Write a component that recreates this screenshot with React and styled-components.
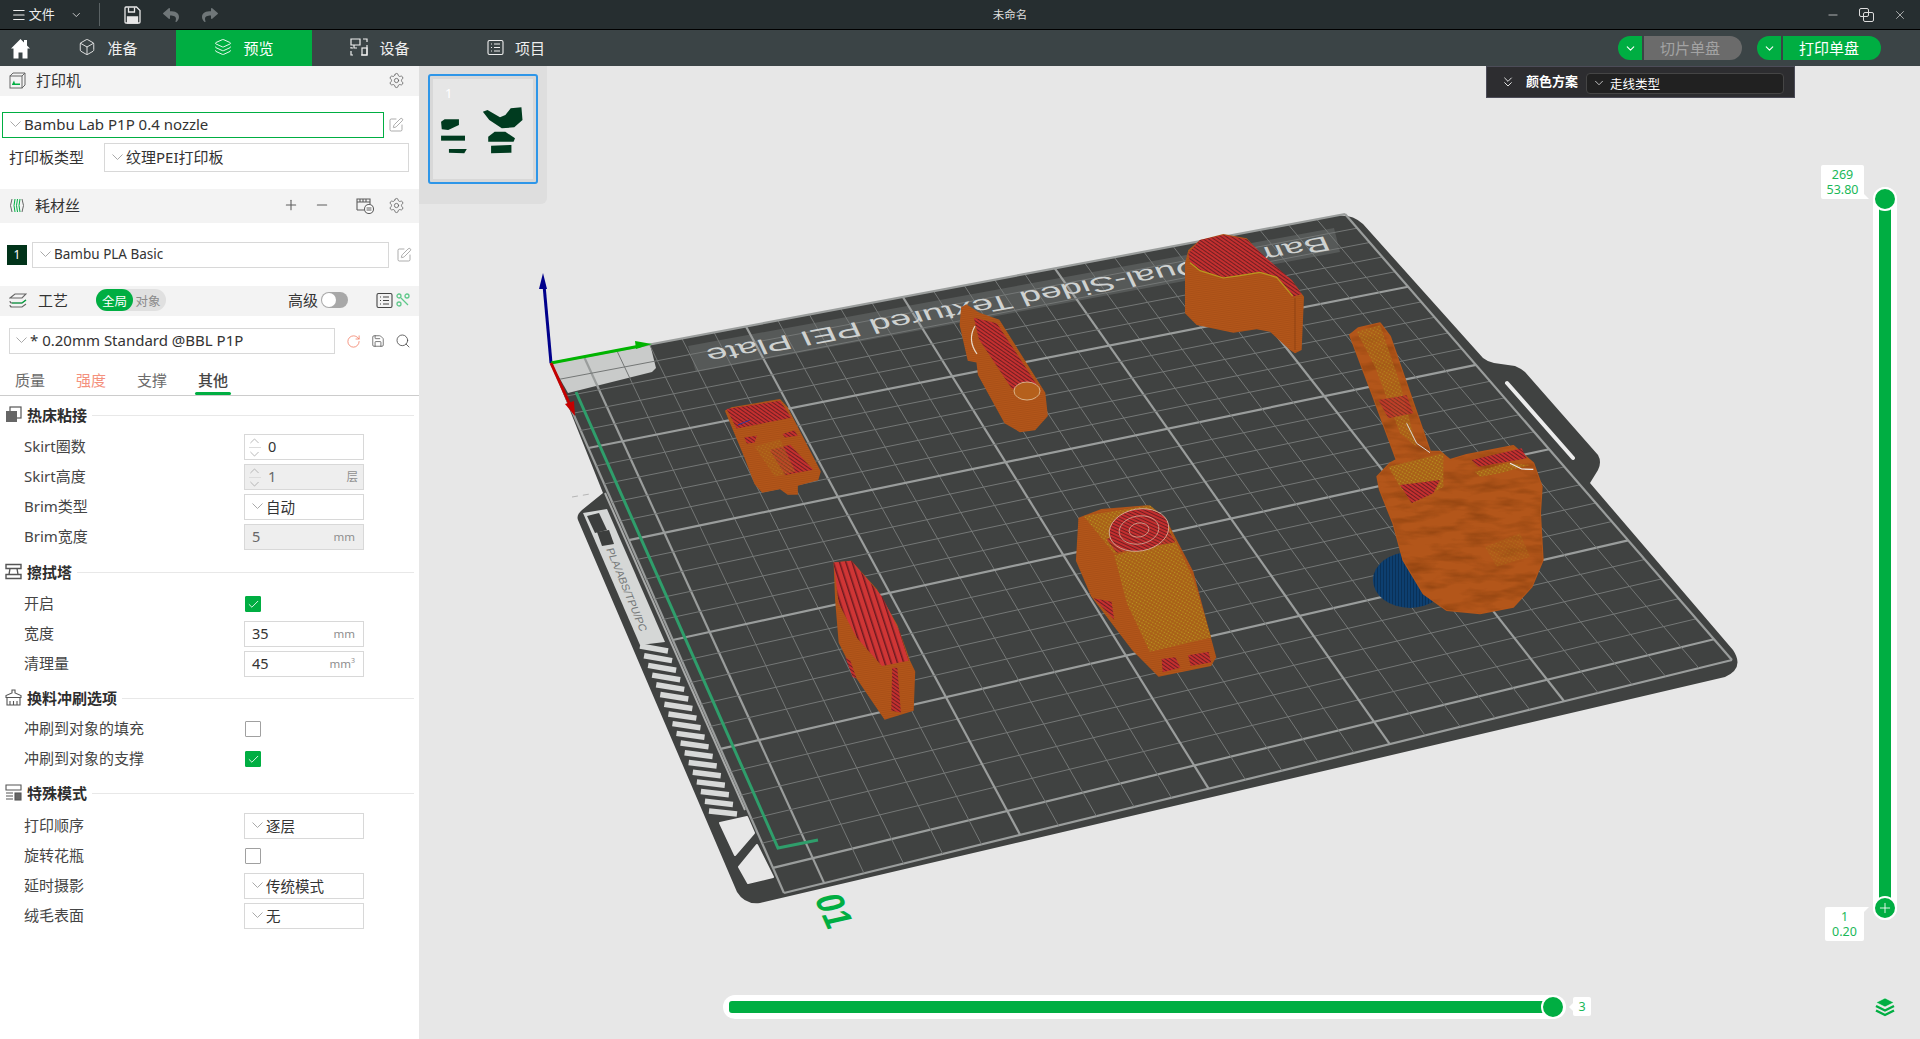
import React from 'react';
import styled, { createGlobalStyle } from 'styled-components';
import { Menu, ChevronDown, Save, Box, Layers, SquarePen, Plus, Minus, Settings, Search, RotateCw, Check, X, ChevronsDown } from 'lucide-react';
import { FaReply, FaShare } from 'react-icons/fa';

const GREEN = '#00ae42';
const FONT = '"Noto Sans", "Noto Sans CJK SC", sans-serif';

const Global = createGlobalStyle`
  html, body { margin: 0; padding: 0; height: 100%; overflow: hidden; }
  body { font-family: ${FONT}; color: #333; background: #e7e7e7; }
  * { box-sizing: border-box; }
`;

const Page = styled.div`
  display: flex;
  flex-direction: column;
  width: 1920px;
  height: 1039px;
  overflow: hidden;
`;

/* top bars */
const TitleBar = styled.div`
  display: flex;
  align-items: center;
  height: 30px;
  background: #262e30;
  border-bottom: 1px solid #000;
  color: #eee;
  flex: none;
`;
const TitleLeft = styled.div`
  display: flex;
  align-items: center;
  width: 240px;
  padding-left: 11px;
  font-size: 13px;
`;
const MenuText = styled.span`
  margin-left: 2px;
  width: 52px;
  padding-bottom: 2px;
`;
const TitleDivider = styled.div`
  width: 1px;
  height: 23px;
  background: #5a6264;
  margin: 0 24px 0 17px;
`;
const TitleAction = styled.span`
  display: flex;
  margin-right: ${p => p.$gap || 22}px;
  color: ${p => (p.$dim ? '#6f7678' : '#e8e8e8')};
`;
const TitleText = styled.div`
  flex: 1;
  text-align: center;
  font-size: 11.5px;
  padding-bottom: 2px;
  color: #ddd;
`;
const WindowButtons = styled.div`
  display: flex;
  align-items: center;
  gap: 19px;
  width: 140px;
  padding-left: 46px;
  color: #ddd;
`;
const TabBar = styled.div`
  display: flex;
  align-items: stretch;
  height: 36px;
  background: #3b4446;
  color: #eee;
  flex: none;
`;
const HomeButton = styled.div`
  display: flex;
  align-items: center;
  justify-content: center;
  width: 40px;
  color: #fff;
`;
const Tab = styled.div`
  display: flex;
  align-items: center;
  justify-content: center;
  gap: 11px;
  width: 136px;
  padding-bottom: 2px;
  font-size: 15px;
  background: ${p => (p.$active ? GREEN : 'transparent')};
  color: ${p => (p.$active ? '#fff' : '#eee')};
`;
const TabActions = styled.div`
  display: flex;
  align-items: center;
  gap: 15px;
  margin-left: auto;
  padding-right: 39px;
`;
const SplitButton = styled.div`
  display: flex;
  gap: 2px;
  height: 24px;
`;
const SplitArrow = styled.div`
  display: flex;
  align-items: center;
  justify-content: center;
  width: 24px;
  background: ${GREEN};
  border-radius: 12px 0 0 12px;
  color: #fff;
`;
const SplitLabel = styled.div`
  width: 98px;
  display: flex;
  align-items: center;
  justify-content: center;
  padding: 0 6px 2px 0;
  font-size: 15px;
  border-radius: 0 12px 12px 0;
  background: ${p => (p.$disabled ? '#6b6b6b' : GREEN)};
  color: ${p => (p.$disabled ? '#a3a3a3' : '#fff')};
`;

/* sidebar */
const Body = styled.div`
  display: flex;
  flex: 1;
  min-height: 0;
`;
const Sidebar = styled.aside`
  width: 419px;
  flex: none;
  background: #fff;
`;
const PanelHeader = styled.div`
  display: flex;
  align-items: center;
  height: ${p => p.$h || 30}px;
  padding: 0 0 2px 9px;
  background: #f3f3f3;
`;
const PanelTitle = styled.span`
  font-size: 15px;
  color: #333;
  margin-left: ${p => p.$left || 10}px;
  margin-bottom: 1px;
`;
const HeaderIcons = styled.div`
  display: flex;
  align-items: center;
  margin-left: auto;
  color: #5c5c5c;
`;
const HeaderIcon = styled.span`
  display: flex;
  margin-right: ${p => p.$gap || 0}px;
`;
const PrinterBlock = styled.div`
  padding: 16px 0 17px 2px;
`;
const SelectRow = styled.div`
  display: flex;
  align-items: center;
  margin-top: ${p => p.$top || 0}px;
  padding-left: ${p => p.$left || 0}px;
`;
const SelectBox = styled.div`
  display: flex;
  align-items: center;
  width: ${p => p.$w}px;
  height: ${p => p.$h || 26}px;
  margin-left: ${p => p.$ml || 0}px;
  padding: 0 0 2px ${p => p.$pad || 7}px;
  border: 1px solid ${p => (p.$focus ? GREEN : '#d8d8d8')};
  background: #fff;
  font-size: ${p => p.$size || 15}px;
  color: #333;
  white-space: nowrap;
`;
const ChevronSvg = styled.svg`
  width: ${p => p.$w || 11}px;
  height: 6px;
  margin-right: ${p => p.$gap || 0}px;
  flex: none;
`;
const Chevron = ({ gap, up, w }) => (
  <ChevronSvg $gap={gap} $w={w} viewBox="0 0 11 6">
    <polyline points={up ? '0.5,5.5 5.5,0.5 10.5,5.5' : '0.5,0.5 5.5,5.5 10.5,0.5'} fill="none" stroke="#a9a9a9" strokeWidth="1" />
  </ChevronSvg>
);
const EditIcon = styled.span`
  display: flex;
  margin-left: ${p => p.$ml || 4}px;
  color: #8f8f8f;
`;
const PlateLabel = styled.span`
  width: 95px;
  padding: 0 0 3px 7px;
  font-size: 15px;
  color: #333;
`;
const FilamentBlock = styled.div`
  display: flex;
  align-items: center;
  height: 63px;
  padding: 0 0 0 7px;
`;
const FilamentBadge = styled.div`
  width: 20px;
  height: 20px;
  background: #01331a;
  color: #fff;
  display: flex;
  align-items: center;
  justify-content: center;
  font-size: 12px;
`;
const ModeSwitch = styled.div`
  display: flex;
  align-items: center;
  width: 70px;
  height: 22px;
  margin-left: 28px;
  border-radius: 11px;
  background: #e0e0e0;
  font-size: 12.5px;
  color: #8a8a8a;
`;
const ModeOn = styled.div`
  width: 37px;
  height: 22px;
  border-radius: 11px;
  background: ${GREEN};
  color: #fff;
  display: flex;
  align-items: center;
  justify-content: center;
`;
const ModeOff = styled.div`
  flex: 1;
  text-align: center;
  padding-right: 3px;
`;
const AdvancedLabel = styled.span`
  font-size: 15px;
  color: #333;
  margin: 0 0 2px auto;
`;
const Toggle = styled.div`
  width: 27px;
  height: 16px;
  margin: 0 28px 0 3px;
  border-radius: 8px;
  background: #a8a8a8;
  padding: 1px;
`;
const ToggleKnob = styled.div`
  width: 14px;
  height: 14px;
  border-radius: 50%;
  background: #fff;
`;
const Tabs = styled.div`
  display: flex;
  height: 42px;
  padding: 14px 0 0 15px;
  border-bottom: 1px solid #ccc;
`;
const SubTab = styled.div`
  position: relative;
  width: 61px;
  font-size: 15px;
  line-height: 24px;
  color: ${p => (p.$warn ? '#f4917d' : p.$active ? '#444' : '#6b6b6b')};
  font-weight: ${p => (p.$active ? 500 : 400)};
  &::after {
    content: '';
    display: ${p => (p.$active ? 'block' : 'none')};
    position: absolute;
    left: -3px;
    top: 24px;
    width: 36px;
    height: 3px;
    border-radius: 2px;
    background: ${GREEN};
  }
`;
const SectionTitle = styled.div`
  display: flex;
  align-items: center;
  height: 22px;
  margin-top: ${p => p.$top}px;
  margin-bottom: ${p => p.$bottom}px;
  padding: 0 5px 2px;
  font-size: 15px;
  font-weight: 700;
  color: #2e2e2e;
  &::after {
    content: '';
    flex: 1;
    height: 1px;
    margin: 2px 0 0 5px;
    background: #e8e8e8;
  }
`;
const SectionIcon = styled.svg`
  width: 17px;
  height: 17px;
  margin-right: 5px;
  flex: none;
`;
const Row = styled.div`
  display: flex;
  align-items: center;
  height: 30px;
  padding-left: 24px;
`;
const RowLabel = styled.div`
  width: 220px;
  padding-bottom: 3px;
  font-size: 15px;
  color: #454545;
`;
const Field = styled.div`
  display: flex;
  align-items: center;
  width: 120px;
  height: 26px;
  padding: 0 ${p => (p.$spin ? 5 : 8)}px 2px ${p => (p.$spin ? 3 : 7)}px;
  border: 1px solid #d8d8d8;
  background: ${p => (p.$disabled ? '#eeeeee' : '#fff')};
  font-size: 14.5px;
  color: ${p => (p.$disabled ? '#666' : '#333')};
`;
const Spinner = styled.div`
  display: flex;
  flex-direction: column;
  align-items: center;
  gap: 3px;
  width: 13px;
  margin: 2px 7px 0 0;
`;
const SpinDivider = styled.div`
  width: 12px;
  height: 1px;
  background: #dcdcdc;
`;
const Unit = styled.span`
  margin-left: auto;
  font-size: 11.5px;
  color: #8e8e8e;
`;
const Sup = styled.sup`
  font-size: 7px;
`;
const CheckBox = styled.div`
  display: flex;
  align-items: center;
  justify-content: center;
  width: 16px;
  height: 16px;
  margin-left: 1px;
  border-radius: 1px;
  background: ${p => (p.$on ? GREEN : '#fff')};
  border: 1px solid ${p => (p.$on ? GREEN : '#a0a0a0')};
  color: #fff;
`;

/* viewport overlays */
const Viewport = styled.main`
  position: relative;
  flex: 1;
  background: #e7e7e7;
  overflow: hidden;
`;
const Scene = styled.svg`
  position: absolute;
  inset: 0;
  width: 1501px;
  height: 973px;
`;
const PlateList = styled.div`
  position: absolute;
  left: 0;
  top: 0;
  width: 128px;
  height: 138px;
  padding: 8px 9px;
  background: #dedede;
  border-radius: 0 0 6px 0;
`;
const PlateThumb = styled.div`
  position: relative;
  width: 110px;
  height: 110px;
  border: 2px solid #2e96e8;
  border-radius: 3px;
  background: #e6e6e6;
  box-shadow: inset 0 0 0 3px #d8d8d8;
`;
const ThumbNumber = styled.span`
  position: absolute;
  left: 15px;
  top: 8px;
  font-size: 13px;
  color: #fff;
`;
const ThumbSvg = styled.svg`
  position: absolute;
  left: -2px;
  top: -2px;
  width: 110px;
  height: 110px;
`;
const ColorPanel = styled.div`
  position: absolute;
  top: 0;
  left: 1067px;
  display: flex;
  align-items: center;
  width: 309px;
  height: 32px;
  padding-left: 13px;
  background: #2d2d30;
  border: 1px solid #4c4c58;
  color: #fff;
`;
const ColorTitle = styled.span`
  font-size: 13px;
  font-weight: 700;
  margin: 0 0 3px 10px;
  width: 60px;
`;
const ColorSelect = styled.div`
  display: flex;
  align-items: center;
  width: 198px;
  height: 21px;
  margin-top: 3px;
  padding: 0 0 1px 5px;
  border: 1px solid #454545;
  border-radius: 4px;
  background: #212121;
  font-size: 12.5px;
`;
const ColorChevron = styled.span`
  display: flex;
  width: 18px;
`;
const VSliderTrack = styled.div`
  position: absolute;
  left: 1454px;
  top: 121px;
  width: 24px;
  height: 733px;
  border-radius: 12px;
  background: #fff;
  padding: 10px 6px;
`;
const VSliderFill = styled.div`
  width: 12px;
  height: 100%;
  background: ${GREEN};
`;
const Knob = styled.div`
  position: absolute;
  display: flex;
  align-items: center;
  justify-content: center;
  width: 24px;
  height: 24px;
  border-radius: 50%;
  background: ${GREEN};
  border: 2px solid #fff;
  color: #fff;
  left: ${p => p.$x}px;
  top: ${p => p.$y}px;
`;
const LayerTip = styled.div`
  position: absolute;
  left: ${p => p.$x}px;
  top: ${p => p.$y}px;
  width: ${p => p.$w || 43}px;
  height: ${p => p.$h || 34}px;
  display: flex;
  flex-direction: column;
  align-items: center;
  justify-content: center;
  background: #fff;
  border-radius: 2px;
  font-size: 12.5px;
  line-height: 15px;
  color: #1ab858;
  &::after {
    content: '';
    position: absolute;
    ${p => p.$tail};
    width: 0;
    height: 0;
    border: 5px solid transparent;
    ${p => p.$tailColor};
  }
`;
const HSliderTrack = styled.div`
  position: absolute;
  left: 304px;
  top: 929px;
  width: 843px;
  height: 24px;
  border-radius: 12px;
  background: #fff;
  padding: 6px;
`;
const HSliderFill = styled.div`
  width: 100%;
  height: 12px;
  border-radius: 3px;
  background: ${GREEN};
`;
const LayersButton = styled.svg`
  position: absolute;
  left: 1455px;
  top: 931px;
  width: 22px;
  height: 20px;
`;

/* small drawn icons */
const HomeIcon = () => (
  <svg width="19" height="21" viewBox="0 0 19 21" fill="#fff">
    <path d="M9.500 1L0 10.500h2.500V20.500h5v-6h4v6h5V10.500H19L16 7.500V2h-3v2.500z" />
  </svg>
);
const FloppyIcon = () => (
  <svg width="17" height="18" viewBox="0 0 17 18" fill="none" stroke="#e8e8e8" strokeWidth="1.300">
    <path d="M1 2q0-1 1-1h10.500L16 4.500V16q0 1-1 1H2q-1 0-1-1z" />
    <path d="M4.500 1.500V6h6V1.500" />
    <path d="M3.500 11h10v6h-10z" fill="#e8e8e8" />
  </svg>
);
const PrinterIcon = () => (
  <svg width="17" height="17" viewBox="0 0 17 17" fill="none" stroke="#666" strokeWidth="1">
    <rect x="1" y="4" width="12" height="12" />
    <path d="M1 4l3-3h12v12l-3 3M13 4l3-3" />
    <path d="M3 13h8v-1.500H6l-1-3-2 4z" fill={GREEN} stroke="none" />
  </svg>
);
const SpoolIcon = () => (
  <svg width="16" height="17" viewBox="0 0 16 17" fill="none" strokeWidth="1">
    <path d="M3 2Q0 8.500 3 15M13 2q3 6.500 0 13" stroke="#666" />
    <path d="M6 2q-2 6.500 0 13M8.500 2q-2 6.500 0 13M11 2q-2 6.500 0 13" stroke={GREEN} />
  </svg>
);
const ProcessIcon = () => (
  <svg width="18" height="16" viewBox="0 0 18 16" fill="none" stroke="#666" strokeWidth="1.100">
    <path d="M1 6l5-4h11l-4 4H1zM1 9c0 1.500 1 2 2 2h10l4-3M1 13c0 1.500 1 2 2 2h10l4-3" />
    <path d="M3 11h10l4-3" stroke={GREEN} />
  </svg>
);
const SwapIcon = () => (
  <svg width="18" height="18" viewBox="0 0 18 18" fill="none" stroke="#5c5c5c" strokeWidth="1.100">
    <path d="M1 14V3h13v5M1 6h13M4 3v3M7 3v3M10 3v3M1 14h7" />
    <circle cx="13" cy="13" r="4.500" fill="#fff" />
    <path d="M10.500 12h5M10.500 14h5" />
  </svg>
);
const WipeIcon = () => (
  <SectionIcon viewBox="0 0 17 17" fill="none" stroke="#555" strokeWidth="1.400">
    <path d="M1 1.500h15v4H1zM1 11.500h15v4H1zM5 5.500l-1 6M12 5.500l1 6" />
  </SectionIcon>
);
const BedIcon = () => (
  <SectionIcon viewBox="0 0 17 17">
    <rect x="5" y="1" width="11" height="11" fill="none" stroke="#555" strokeWidth="1.200" />
    <rect x="1" y="5" width="11" height="11" fill="#666" />
  </SectionIcon>
);
const BrushIcon = () => (
  <SectionIcon viewBox="0 0 17 17" fill="none" stroke="#555" strokeWidth="1.100">
    <path d="M7 1h3v3l6 2.500v2H1v-2L7 4zM2 8.500V16h13V8.500M5 12v4M8.500 12v4M12 12v4" />
  </SectionIcon>
);
const ModeIcon = () => (
  <SectionIcon viewBox="0 0 17 17" fill="none" stroke="#555" strokeWidth="1.100">
    <path d="M1 1h15v5H1zM1 9h7M1 12h7M1 15h7" />
    <rect x="10" y="9" width="6" height="7" fill="#666" />
  </SectionIcon>
);
const DeviceIcon = () => (
  <svg width="18" height="18" viewBox="0 0 18 18" fill="none" stroke="#eee" strokeWidth="1.200">
    <path d="M1 1h9v6H1zM3 10H1v-1M3 17H1v-4M13 1h4v3M17 7v10h-6M6 17" />
    <rect x="12" y="10" width="5" height="7" />
    <path d="M4 7v3h3" />
  </svg>
);
const ListBoxIcon = ({ color = '#eee' }) => (
  <svg width="17" height="17" viewBox="0 0 17 17" fill="none" stroke={color} strokeWidth="1.100">
    <rect x="1" y="1.500" width="15" height="14" rx="1.500" />
    <path d="M4 5h1M4 8.500h1M4 12h1M7 5h6M7 8.500h6M7 12h6" />
  </svg>
);
const TuneIcon = () => (
  <svg width="14" height="14" viewBox="0 0 14 14" fill="none" stroke="#5fc88a" strokeWidth="1.300">
    <circle cx="3" cy="3" r="2" />
    <circle cx="11" cy="3" r="2" />
    <circle cx="3" cy="11" r="2" />
    <path d="M5 5l7 7" />
  </svg>
);

/* plate scene data, points read off the reference */
const pts = (ox, oy, sx, sy, list) => list.map(([x, y]) => `${ox + x / sx},${oy + y / sy}`).join(' ');
const z5 = list => pts(530, 200, 1.96, 2.8, list);
const z6 = list => pts(1300, 300, 3, 3, list);
const z9 = list => pts(1100, 190, 3, 3, list);

const plateOutline =
  'M551 363L1330 217Q1350 212 1363 224L1483 358Q1488 362 1494 363L1515 366Q1520 368 1525 372L1598 455Q1602 462 1598 470L1590 483L1733 650Q1745 668 1725 677L760 903Q745 905 737 892L578 520Q576 515 582 510L603 493Z';

const projector = (p0, p1, p2, p3) => {
  const dx1 = p1[0] - p2[0], dx2 = p3[0] - p2[0], sx = p0[0] - p1[0] + p2[0] - p3[0];
  const dy1 = p1[1] - p2[1], dy2 = p3[1] - p2[1], sy = p0[1] - p1[1] + p2[1] - p3[1];
  const den = dx1 * dy2 - dx2 * dy1;
  const g = (sx * dy2 - dx2 * sy) / den;
  const h = (dx1 * sy - sx * dy1) / den;
  const a = p1[0] - p0[0] + g * p1[0], b = p3[0] - p0[0] + h * p3[0];
  const d = p1[1] - p0[1] + g * p1[1], e = p3[1] - p0[1] + h * p3[1];
  return (u, v) => {
    const w = g * u + h * v + 1;
    return [(a * u + b * v + p0[0]) / w, (d * u + e * v + p0[1]) / w];
  };
};
const project = projector([551, 363], [1345, 214], [1732, 660], [784, 893]);
const CELLS = 26;

const gridLines = [];
for (let i = 0; i <= CELLS; i++) {
  const t = i / CELLS;
  const thick = i % 5 === 1 || i === 0 || i === CELLS;
  const a = project(t, 0), b = project(t, 1), c = project(0, 1 - t), d = project(1, 1 - t);
  gridLines.push({ k: `v${i}`, a, b, thick });
  gridLines.push({ k: `h${i}`, a: c, b: d, thick });
}

const lerp = (a, b, t) => a + (b - a) * t;
const hatch = Array.from({ length: 18 }, (_, i) => {
  const t = i / 17;
  return {
    x1: lerp(640, 709, t), y1: lerp(646, 811, t),
    x2: lerp(668, 737, t), y2: lerp(651, 814, t),
  };
});

const ThumbShapes = [
  [[1235, 365], [1245, 358], [1285, 358], [1285, 375], [1255, 390], [1237, 388]],
  [[1235, 407], [1302, 407], [1302, 422], [1235, 422]],
  [[1257, 447], [1307, 447], [1300, 460], [1257, 458]],
  [[1352, 335], [1365, 330], [1400, 352], [1415, 345], [1430, 325], [1460, 322], [1463, 360], [1440, 382], [1405, 385], [1370, 360]],
  [[1367, 410], [1385, 395], [1415, 395], [1442, 415], [1438, 425], [1367, 425]],
  [[1375, 437], [1432, 435], [1432, 458], [1375, 460]],
];

const pipeOutline = [[150, 105], [175, 85], [240, 70], [270, 110], [390, 455], [420, 455], [450, 480], [500, 465], [640, 438], [700, 490], [725, 560], [720, 640], [728, 780], [695, 860], [640, 920], [540, 940], [440, 930], [370, 880], [310, 780], [280, 670], [240, 570], [232, 530], [270, 490], [290, 480], [220, 290]];

const PlateScene = () => (
  <Scene viewBox="419 66 1501 973">
    <defs>
      <pattern id="redFine" width="3" height="3" patternUnits="userSpaceOnUse" patternTransform="rotate(35)">
        <rect width="3" height="3" fill="#c42f2f" />
        <rect width="3" height="1" fill="#6e1f22" />
      </pattern>
      <pattern id="redWide" width="6" height="6" patternUnits="userSpaceOnUse" patternTransform="rotate(-18)">
        <rect width="6" height="6" fill="#cf3535" />
        <rect width="1.500" height="6" fill="#6b1a20" />
      </pattern>
      <pattern id="orange" width="4" height="2" patternUnits="userSpaceOnUse" patternTransform="rotate(-8)">
        <rect width="4" height="2" fill="#b3561a" />
        <rect width="4" height="0.700" fill="#a54d15" />
      </pattern>
      <pattern id="yellow" width="3" height="3" patternUnits="userSpaceOnUse" patternTransform="rotate(30)">
        <rect width="3" height="3" fill="#a95f18" />
        <circle cx="1.500" cy="1.500" r="0.800" fill="#b9981f" />
      </pattern>
      <pattern id="blueDots" width="3" height="3" patternUnits="userSpaceOnUse">
        <rect width="3" height="3" fill="#0d3f70" />
        <rect width="1" height="3" fill="#0a3158" />
      </pattern>
      <filter id="grain" x="0" y="0" width="100%" height="100%" colorInterpolationFilters="sRGB">
        <feTurbulence type="fractalNoise" baseFrequency="0.03 0.11" numOctaves="3" seed="7" />
        <feColorMatrix values="0 0 0 0 0.56  0 0 0 0 0.26  0 0 0 0 0.06  2 0 0 0 -0.85" />
        <feComposite in2="SourceGraphic" operator="in" />
      </filter>
    </defs>

    <path d={plateOutline} fill="#404241" />

    {/* corner label and strips on the plate */}
    <polygon points="551,363 650,344 656,368 652,372 568,393" fill="#c9cbca" />
    <polygon points="583,513 607,509 665,642 640,645" fill="#d5d7d6" />
    <polygon points="587,516 599,513 607,530 595,533" fill="#3c3e3d" />
    <polygon points="597,532 609,530 614,544 602,546" fill="#3c3e3d" />
    <text
      transform="matrix(0.38 0.92 -0.95 0.2 606 549)"
      fontFamily="Liberation Sans, sans-serif"
      fontSize="11"
      fill="#767979"
      textLength="90"
    >
      PLA/ABS/TPU/PC
    </text>
    {hatch.map((s, i) => (
      <line key={i} {...s} stroke="#d7d9d8" strokeWidth="5.500" />
    ))}
    <polygon points="720,823 747,817 754,833 735,855" fill="#e7e7e7" stroke="#e7e7e7" strokeLinejoin="round" strokeWidth="2" />
    <polygon points="757,845 773,877 748,883 739,867" fill="#e7e7e7" stroke="#e7e7e7" strokeLinejoin="round" strokeWidth="2" />
    <line x1="605" y1="493" x2="745" y2="810" stroke="#a9abaa" strokeWidth="2" />
    <line x1="1507" y1="383" x2="1573" y2="458" stroke="#ececec" strokeWidth="4" strokeLinecap="round" />
    <line x1="572" y1="497" x2="590" y2="494" stroke="#b5b5b5" strokeWidth="1" strokeDasharray="6 5" />

    {/* textured plate name strip */}
    <polygon points="688,346 1334,228 1340,252 696,372" fill="#565958" />

    {gridLines.map(l => (
      <line
        key={l.k}
        x1={l.a[0]}
        y1={l.a[1]}
        x2={l.b[0]}
        y2={l.b[1]}
        stroke={l.thick ? '#9a9d9c' : '#747776'}
        strokeWidth={l.thick ? 2.2 : 1}
      />
    ))}
    <text
      transform="matrix(-0.984 0.18 -0.42 -0.9 1326 236)"
      fontFamily="Liberation Sans, sans-serif"
      fontSize="22"
      fill="#cfd2d1"
      textLength="632"
      lengthAdjust="spacingAndGlyphs"
    >
      Bambu Dual-Sided Textured PEI Plate
    </text>

    <polyline points="576,392 778,848 818,840" fill="none" stroke="#2f9e6b" strokeWidth="3" />

    {/* whistle shell, top right */}
    <polygon
      points={z9([[255, 220], [255, 370], [290, 405], [400, 428], [470, 418], [510, 425], [570, 480], [585, 490], [605, 480], [612, 320], [575, 270], [500, 210], [440, 145], [370, 132], [300, 150], [265, 180]])}
      fill="url(#orange)"
    />
    <polygon
      points={z9([[265, 190], [300, 150], [370, 135], [440, 148], [500, 205], [575, 270], [605, 312], [580, 320], [530, 260], [480, 245], [420, 255], [370, 262], [300, 240], [270, 215]])}
      fill="url(#redFine)"
    />
    <polyline points={z9([[270, 218], [300, 242], [370, 264], [420, 257], [480, 247], [530, 262], [578, 318]])} fill="none" stroke="#b9981f" strokeWidth="1.200" />
    <line x1="1295" y1="298" x2="1295" y2="350" stroke="#8f4212" strokeWidth="1" />

    {/* pen shaped part */}
    <polygon
      points={z5([[845, 300], [855, 292], [880, 315], [920, 335], [1010, 540], [1015, 605], [990, 645], [960, 650], [930, 625], [878, 490], [875, 455], [858, 450], [842, 350]])}
      fill="url(#orange)"
    />
    <polygon points={z5([[870, 330], [915, 345], [995, 520], [965, 515], [945, 530], [880, 390]])} fill="url(#redFine)" />
    <ellipse cx="1027" cy="391" rx="13" ry="9" fill="#b5601c" stroke="#e3c9a5" strokeWidth="0.800" />
    <path d={`M975 326Q967 340 977 354`} fill="none" stroke="#e8dccb" strokeWidth="1.200" />

    {/* small block */}
    <polygon
      points={z5([[382, 590], [395, 580], [490, 557], [505, 580], [570, 760], [565, 785], [525, 800], [525, 825], [505, 825], [490, 810], [455, 820], [440, 795], [420, 720]])}
      fill="url(#orange)"
    />
    <polygon points={z5([[385, 585], [490, 562], [512, 610], [405, 640]])} fill="url(#redFine)" />
    <polygon points={z5([[470, 700], [510, 685], [555, 755], [500, 770]])} fill="url(#redFine)" />
    <polygon points={z5([[420, 665], [445, 660], [440, 680], [425, 682]])} fill="url(#redFine)" />
    <polygon points={z5([[495, 655], [518, 645], [525, 660], [500, 665]])} fill="url(#redFine)" />
    <polygon points={z5([[440, 690], [490, 670], [520, 760], [480, 775]])} fill="url(#yellow)" opacity="0.45" />
    <line x1="738" y1="425" x2="750" y2="420" stroke="#2b3aa0" strokeWidth="1" />

    {/* wedge, bottom left */}
    <polygon
      points={z5([[595, 1015], [630, 1010], [680, 1090], [720, 1190], [745, 1290], [755, 1320], [752, 1430], [695, 1455], [640, 1340], [605, 1240], [598, 1120]])}
      fill="url(#orange)"
    />
    <polygon points={z5([[595, 1015], [630, 1010], [690, 1110], [725, 1210], [742, 1290], [690, 1305], [640, 1225], [605, 1130]])} fill="url(#redWide)" />
    <polygon points={z5([[618, 1280], [628, 1290], [640, 1340], [632, 1335]])} fill="url(#redFine)" />
    <polygon points={z5([[710, 1310], [720, 1310], [727, 1435], [708, 1430]])} fill="url(#redFine)" />

    {/* big body */}
    <polygon
      points={z5([[1075, 890], [1120, 865], [1210, 855], [1245, 890], [1300, 1040], [1345, 1280], [1335, 1305], [1232, 1335], [1180, 1260], [1100, 1110], [1070, 1010]])}
      fill="url(#orange)"
    />
    <polygon points={z5([[1145, 995], [1265, 955], [1300, 1060], [1335, 1225], [1215, 1265], [1170, 1130]])} fill="url(#yellow)" />
    <polygon points={z5([[1085, 885], [1215, 855], [1245, 890], [1265, 960], [1145, 990]])} fill="url(#yellow)" />
    <polygon points={z5([[1130, 950], [1190, 905], [1250, 920], [1265, 958], [1150, 988]])} fill="url(#redFine)" opacity="0.85" />
    <ellipse cx="1139" cy="530" rx="30" ry="21" fill="url(#redFine)" stroke="#d9b5a0" strokeWidth="0.800" transform="rotate(-10 1139 530)" />
    <ellipse cx="1139" cy="530" rx="20" ry="14" fill="none" stroke="#d9b5a0" strokeWidth="0.700" transform="rotate(-10 1139 530)" />
    <ellipse cx="1139" cy="530" rx="10" ry="7" fill="none" stroke="#d9b5a0" strokeWidth="0.700" transform="rotate(-10 1139 530)" />
    <polygon points={z5([[1238, 1285], [1265, 1280], [1275, 1310], [1240, 1322]])} fill="url(#redFine)" />
    <polygon points={z5([[1290, 1275], [1330, 1265], [1335, 1295], [1295, 1305]])} fill="url(#redFine)" />
    <polygon points={z5([[1105, 1115], [1140, 1125], [1145, 1175]])} fill="url(#redFine)" />

    {/* pipe with its brim */}
    <ellipse cx="1410" cy="580" rx="37" ry="28" fill="url(#blueDots)" />
    <polygon points={z6(pipeOutline)} fill="#b3561a" stroke="#b3561a" strokeLinejoin="round" strokeWidth="2" />
    <polygon points={z6(pipeOutline)} fill="#000" filter="url(#grain)" />
    <polygon points={z6([[170, 95], [240, 75], [300, 250], [350, 440], [300, 400], [225, 200]])} fill="url(#yellow)" opacity="0.75" />
    <polygon points={z6([[235, 300], [320, 285], [340, 340], [265, 355]])} fill="url(#redFine)" opacity="0.7" />
    <polygon points={z6([[265, 500], [430, 460], [430, 560], [340, 610], [300, 560]])} fill="url(#yellow)" />
    <polygon points={z6([[300, 555], [420, 540], [400, 580], [335, 610]])} fill="url(#redFine)" />
    <polygon points={z6([[515, 480], [665, 445], [680, 475], [535, 500]])} fill="url(#redFine)" />
    <polygon points={z6([[525, 515], [620, 490], [690, 495], [600, 520], [540, 530]])} fill="url(#yellow)" />
    <polyline points={z6([[320, 370], [350, 430], [390, 458]])} fill="none" stroke="#ddd" strokeWidth="1" />
    <polyline points={z6([[630, 490], [665, 507], [700, 508]])} fill="none" stroke="#eee" strokeWidth="1.200" />
    <polygon points={z6([[555, 740], [660, 700], [690, 770], [590, 800]])} fill="url(#yellow)" opacity="0.35" />

    {/* axes */}
    <line x1="551" y1="363" x2="544" y2="285" stroke="#00008b" strokeWidth="3" />
    <polygon points="543,273 547,289 539,289" fill="#00008b" />
    <line x1="551" y1="363" x2="640" y2="346" stroke="#00b400" strokeWidth="3" />
    <polygon points="652,344 636,349 635,341" fill="#00b400" />
    <line x1="551" y1="363" x2="570" y2="405" stroke="#c40000" strokeWidth="3" />
    <polygon points="575,416 565,404 574,401" fill="#c40000" />

    <text
      transform="matrix(0.32 0.72 -0.95 0.22 814 898)"
      fontFamily="Liberation Sans, sans-serif"
      fontSize="40"
      fontWeight="700"
      fill="#00ae42"
    >
      01
    </text>
  </Scene>
);

const SpinField = ({ value, disabled, unit }) => (
  <Field $spin $disabled={disabled}>
    <Spinner>
      <Chevron up w={9} />
      <SpinDivider />
      <Chevron w={9} />
    </Spinner>
    {value}
    {unit && <Unit>{unit}</Unit>}
  </Field>
);

const SelectField = ({ value }) => (
  <Field>
    <Chevron gap={3} />
    {value}
  </Field>
);

const SettingRow = ({ label, children }) => (
  <Row>
    <RowLabel>{label}</RowLabel>
    {children}
  </Row>
);

export default function App() {
  return (
    <Page>
      <Global />
      <TitleBar>
        <TitleLeft>
          <Menu size={20} strokeWidth={1.6} />
          <MenuText>文件</MenuText>
          <ChevronDown size={16} strokeWidth={1.5} />
          <TitleDivider />
          <TitleAction $gap={22}><FloppyIcon /></TitleAction>
          <TitleAction $dim $gap={23}><FaReply size={16} /></TitleAction>
          <TitleAction $dim><FaShare size={16} /></TitleAction>
        </TitleLeft>
        <TitleText>未命名</TitleText>
        <WindowButtons>
          <Minus size={14} strokeWidth={1.3} />
          <svg width="15" height="14" viewBox="0 0 15 14" fill="none" stroke="#ddd">
            <rect x="0.500" y="0.500" width="9" height="8" rx="1.500" />
            <rect x="4.500" y="4.500" width="10" height="9" rx="1.500" />
          </svg>
          <X size={14} strokeWidth={1.2} />
        </WindowButtons>
      </TitleBar>
      <TabBar>
        <HomeButton><HomeIcon /></HomeButton>
        <Tab><Box size={18} strokeWidth={1.2} />准备</Tab>
        <Tab $active><Layers size={18} strokeWidth={1.2} />预览</Tab>
        <Tab><DeviceIcon />设备</Tab>
        <Tab><ListBoxIcon />项目</Tab>
        <TabActions>
          <SplitButton>
            <SplitArrow><ChevronDown size={13} /></SplitArrow>
            <SplitLabel $disabled>切片单盘</SplitLabel>
          </SplitButton>
          <SplitButton>
            <SplitArrow><ChevronDown size={13} /></SplitArrow>
            <SplitLabel>打印单盘</SplitLabel>
          </SplitButton>
        </TabActions>
      </TabBar>
      <Body>
        <Sidebar>
          <PanelHeader>
            <PrinterIcon />
            <PanelTitle>打印机</PanelTitle>
            <HeaderIcons>
              <HeaderIcon $gap={14}><Settings size={17} strokeWidth={1.1} /></HeaderIcon>
            </HeaderIcons>
          </PanelHeader>
          <PrinterBlock>
            <SelectRow>
              <SelectBox $w={382} $focus>
                <Chevron gap={3} />
                Bambu Lab P1P 0.4 nozzle
              </SelectBox>
              <EditIcon><SquarePen size={16} strokeWidth={1.1} /></EditIcon>
            </SelectRow>
            <SelectRow $top={5}>
              <PlateLabel>打印板类型</PlateLabel>
              <SelectBox $w={305} $h={29} $ml={7}>
                <Chevron gap={3} />
                纹理PEI打印板
              </SelectBox>
            </SelectRow>
          </PrinterBlock>
          <PanelHeader $h={34}>
            <SpoolIcon />
            <PanelTitle>耗材丝</PanelTitle>
            <HeaderIcons>
              <HeaderIcon $gap={15}><Plus size={16} strokeWidth={1.6} /></HeaderIcon>
              <HeaderIcon $gap={26}><Minus size={16} strokeWidth={1.6} /></HeaderIcon>
              <HeaderIcon $gap={14}><SwapIcon /></HeaderIcon>
              <HeaderIcon $gap={14}><Settings size={17} strokeWidth={1.1} /></HeaderIcon>
            </HeaderIcons>
          </PanelHeader>
          <FilamentBlock>
            <FilamentBadge>1</FilamentBadge>
            <SelectBox $w={357} $ml={5} $size={13.5}>
              <Chevron gap={3} />
              Bambu PLA Basic
            </SelectBox>
            <EditIcon $ml={7}><SquarePen size={16} strokeWidth={1.1} /></EditIcon>
          </FilamentBlock>
          <PanelHeader>
            <ProcessIcon />
            <PanelTitle $left={11}>工艺</PanelTitle>
            <ModeSwitch>
              <ModeOn>全局</ModeOn>
              <ModeOff>对象</ModeOff>
            </ModeSwitch>
            <AdvancedLabel>高级</AdvancedLabel>
            <Toggle><ToggleKnob /></Toggle>
            <HeaderIcon $gap={3}><ListBoxIcon color="#444" /></HeaderIcon>
            <HeaderIcon $gap={9}><TuneIcon /></HeaderIcon>
          </PanelHeader>
          <SelectRow $top={12} $left={9}>
            <SelectBox $w={326} $pad={6}>
              <Chevron gap={3} />
              * 0.20mm Standard @BBL P1P
            </SelectBox>
            <EditIcon $ml={11}><RotateCw size={15} color="#f0745a" strokeWidth={1.2} /></EditIcon>
            <EditIcon $ml={10}><Save size={14} color="#444" strokeWidth={1.2} /></EditIcon>
            <EditIcon $ml={10}><Search size={16} color="#444" strokeWidth={1.2} /></EditIcon>
          </SelectRow>
          <Tabs>
            <SubTab>质量</SubTab>
            <SubTab $warn>强度</SubTab>
            <SubTab>支撑</SubTab>
            <SubTab $active>其他</SubTab>
          </Tabs>

          <SectionTitle $top={8} $bottom={6}><BedIcon />热床粘接</SectionTitle>
          <SettingRow label="Skirt圈数"><SpinField value="0" /></SettingRow>
          <SettingRow label="Skirt高度"><SpinField value="1" disabled unit="层" /></SettingRow>
          <SettingRow label="Brim类型"><SelectField value="自动" /></SettingRow>
          <SettingRow label="Brim宽度"><Field $disabled>5<Unit>mm</Unit></Field></SettingRow>

          <SectionTitle $top={9} $bottom={6}><WipeIcon />擦拭塔</SectionTitle>
          <SettingRow label="开启"><CheckBox $on><Check size={13} strokeWidth={1.6} /></CheckBox></SettingRow>
          <SettingRow label="宽度"><Field>35<Unit>mm</Unit></Field></SettingRow>
          <SettingRow label="清理量"><Field>45<Unit>mm<Sup>3</Sup></Unit></Field></SettingRow>

          <SectionTitle $top={8} $bottom={5}><BrushIcon />换料冲刷选项</SectionTitle>
          <SettingRow label="冲刷到对象的填充"><CheckBox /></SettingRow>
          <SettingRow label="冲刷到对象的支撑"><CheckBox $on><Check size={13} strokeWidth={1.6} /></CheckBox></SettingRow>

          <SectionTitle $top={8} $bottom={7}><ModeIcon />特殊模式</SectionTitle>
          <SettingRow label="打印顺序"><SelectField value="逐层" /></SettingRow>
          <SettingRow label="旋转花瓶"><CheckBox /></SettingRow>
          <SettingRow label="延时摄影"><SelectField value="传统模式" /></SettingRow>
          <SettingRow label="绒毛表面"><SelectField value="无" /></SettingRow>
        </Sidebar>

        <Viewport>
          <PlateScene />
          <PlateList>
            <PlateThumb>
              <ThumbNumber>1</ThumbNumber>
              <ThumbSvg viewBox="428 74 110 110">
                {ThumbShapes.map((s, i) => (
                  <polygon key={i} points={pts(0, 0, 2.8, 3, s)} fill="#003b1f" />
                ))}
              </ThumbSvg>
            </PlateThumb>
          </PlateList>
          <ColorPanel>
            <ChevronsDown size={16} strokeWidth={1.3} />
            <ColorTitle>颜色方案</ColorTitle>
            <ColorSelect>
              <ColorChevron><ChevronDown size={14} strokeWidth={1.2} /></ColorChevron>
              走线类型
            </ColorSelect>
          </ColorPanel>

          <VSliderTrack><VSliderFill /></VSliderTrack>
          <Knob $x={1454} $y={121} />
          <Knob $x={1454} $y={830}><Plus size={16} strokeWidth={1.3} /></Knob>
          <LayerTip $x={1402} $y={99} $tail="right: -5px; bottom: 0" $tailColor="border-left-color: #fff; border-bottom-color: #fff;">
            <span>269</span>
            <span>53.80</span>
          </LayerTip>
          <LayerTip $x={1406} $y={841} $w={39} $tail="right: -5px; top: 0" $tailColor="border-left-color: #fff; border-top-color: #fff;">
            <span>1</span>
            <span>0.20</span>
          </LayerTip>

          <HSliderTrack><HSliderFill /></HSliderTrack>
          <Knob $x={1122} $y={929} />
          <LayerTip $x={1154} $y={931} $w={18} $h={19} $tail="left: -9px; top: 5px" $tailColor="border-right-color: #fff;">
            <span>3</span>
          </LayerTip>

          <LayersButton viewBox="0 0 22 20">
            <path d="M11 1l9 4.500-9 4.500-9-4.500z" fill={GREEN} stroke="#fff" strokeWidth="0.600" />
            <path d="M2 9l9 4.500L20 9" fill="none" stroke={GREEN} strokeWidth="2.400" />
            <path d="M2 13.500l9 4.500 9-4.500" fill="none" stroke={GREEN} strokeWidth="2.400" />
          </LayersButton>
        </Viewport>
      </Body>
    </Page>
  );
}
